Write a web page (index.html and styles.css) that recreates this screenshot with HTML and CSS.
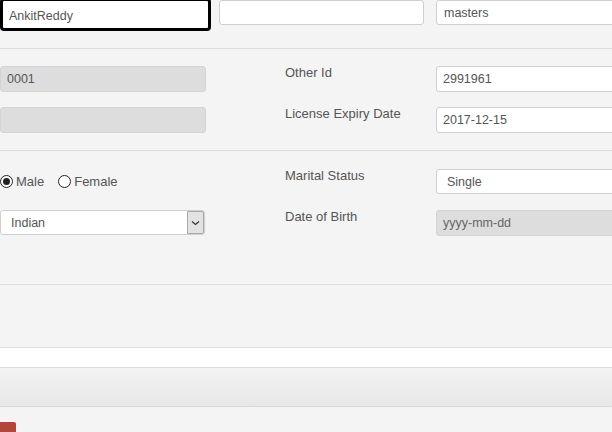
FILE: index.html
```html
<!DOCTYPE html>
<html>
<head>
<meta charset="utf-8">
<link rel="stylesheet" href="styles.css">
</head>
<body>
<div class="page">
  <div class="top">
    <input class="field focused" type="text" value="AnkitReddy">
    <input class="field mid" type="text" value="">
    <input class="field last" type="text" value="masters">
  </div>

  <div class="section s1">
    <div class="row">
      <div class="cell"><input class="field disabled" type="text" value="0001" disabled></div>
      <div class="label">Other Id</div>
      <div class="cell right"><input class="field wide" type="text" value="2991961"></div>
    </div>
    <div class="row">
      <div class="cell"><input class="field disabled" type="text" value="" disabled></div>
      <div class="label">License Expiry Date</div>
      <div class="cell right"><input class="field wide" type="text" value="2017-12-15"></div>
    </div>
  </div>

  <div class="section s2">
    <div class="row">
      <div class="cell radios">
        <label class="radio"><input type="radio" name="g" checked><span>Male</span></label>
        <label class="radio"><input type="radio" name="g"><span>Female</span></label>
      </div>
      <div class="label">Marital Status</div>
      <div class="cell right"><select class="field wide sel"><option>Single</option></select></div>
    </div>
    <div class="row">
      <div class="cell">
        <div class="select-wrap">
          <select class="field sel nation"><option>Indian</option></select>
          <span class="arrow"><svg width="9" height="6" viewBox="0 0 9 6"><path d="M1 1.5 L4.5 4.5 L8 1.5" fill="none" stroke="#333" stroke-width="1.2"/></svg></span>
        </div>
      </div>
      <div class="label">Date of Birth</div>
      <div class="cell right"><input class="field wide disabled" type="text" placeholder="yyyy-mm-dd" disabled></div>
    </div>
  </div>

  <div class="section s3"></div>
  <div class="band-white"></div>
  <div class="band-grad"></div>
  <div class="footer"><span class="red-btn"></span></div>
</div>
</body>
</html>
```

FILE: styles.css
```css
html, body {
  margin: 0;
  padding: 0;
  background: #f4f4f4;
  overflow: hidden;
  font-family: "Liberation Sans", Arial, sans-serif;
  color: #555;
}

.page {
  width: 700px;
}

.field {
  box-sizing: border-box;
  font-family: "Liberation Sans", Arial, sans-serif;
  font-size: 12.5px;
  color: #555;
  background: #fff;
  border: 1px solid #cfcfcf;
  border-radius: 3px;
  height: 26px;
  padding: 0 6px;
  margin: 0;
  outline: none;
}

.top {
  display: flex;
  align-items: flex-start;
  height: 48px;
  border-bottom: 1px solid #dcdcdc;
}

.top .field {
  height: 25px;
  width: 205px;
}

.top .focused {
  width: 211px;
  height: 33px;
  margin-top: -2px;
  border: 3px solid #000;
  border-radius: 4px;
  padding: 2px 6px 0;
}

.top .mid {
  margin-left: 8px;
}

.top .last {
  margin-left: 12px;
  padding-left: 7px;
}

.section {
  display: flex;
  flex-direction: column;
  gap: 15px;
  border-bottom: 1px solid #dcdcdc;
}

.s1 {
  padding: 17px 0 17px;
}

.s2 {
  padding: 18px 0 48px;
}

.s3 {
  height: 62px;
}

.row {
  display: grid;
  grid-template-columns: 285px 151px 1fr;
  height: 26px;
}

.cell .field {
  width: 206px;
}

.cell.right .field.wide {
  width: 210px;
}

.disabled {
  background: #dddddd;
  border-color: #d4d4d4;
}

.disabled::placeholder {
  color: #666;
  opacity: 1;
}

.label {
  font-size: 13px;
  line-height: 15px;
  margin-top: -1px;
  color: #555;
}

.radios {
  display: flex;
  align-items: center;
  gap: 14px;
  height: 24px;
  padding-top: 0;
}

.radio {
  display: flex;
  align-items: center;
  gap: 3px;
  font-size: 13px;
  color: #555;
}

.radio input {
  -webkit-appearance: none;
  appearance: none;
  box-sizing: border-box;
  width: 13px;
  height: 13px;
  margin: 0;
  border: 1px solid #222;
  border-radius: 50%;
  background: #fff;
  display: grid;
  place-items: center;
}

.radio input:checked::after {
  content: "";
  width: 7px;
  height: 7px;
  border-radius: 50%;
  background: #222;
}

.sel {
  -webkit-appearance: none;
  appearance: none;
  padding-left: 10px;
  height: 25px;
}

.select-wrap {
  position: relative;
  width: 205px;
}

.cell .select-wrap .nation {
  width: 205px;
}

.arrow {
  position: absolute;
  top: 1px;
  right: 1px;
  width: 17px;
  height: 23px;
  box-sizing: border-box;
  background: #e2e2e2;
  border: 1px solid #a9a9a9;
  border-radius: 0 2px 2px 0;
  display: flex;
  align-items: center;
  justify-content: center;
}

.band-white {
  height: 19px;
  background: #fff;
  border-bottom: 1px solid #dcdcdc;
}

.band-grad {
  height: 38px;
  background: linear-gradient(#f3f3f3, #e7e7e7);
  border-bottom: 1px solid #d8d8d8;
}

.footer {
  padding-top: 15px;
  height: 40px;
}

.red-btn {
  display: block;
  width: 16px;
  height: 20px;
  background: #b0473a;
  border-radius: 0 2px 0 0;
}
```
